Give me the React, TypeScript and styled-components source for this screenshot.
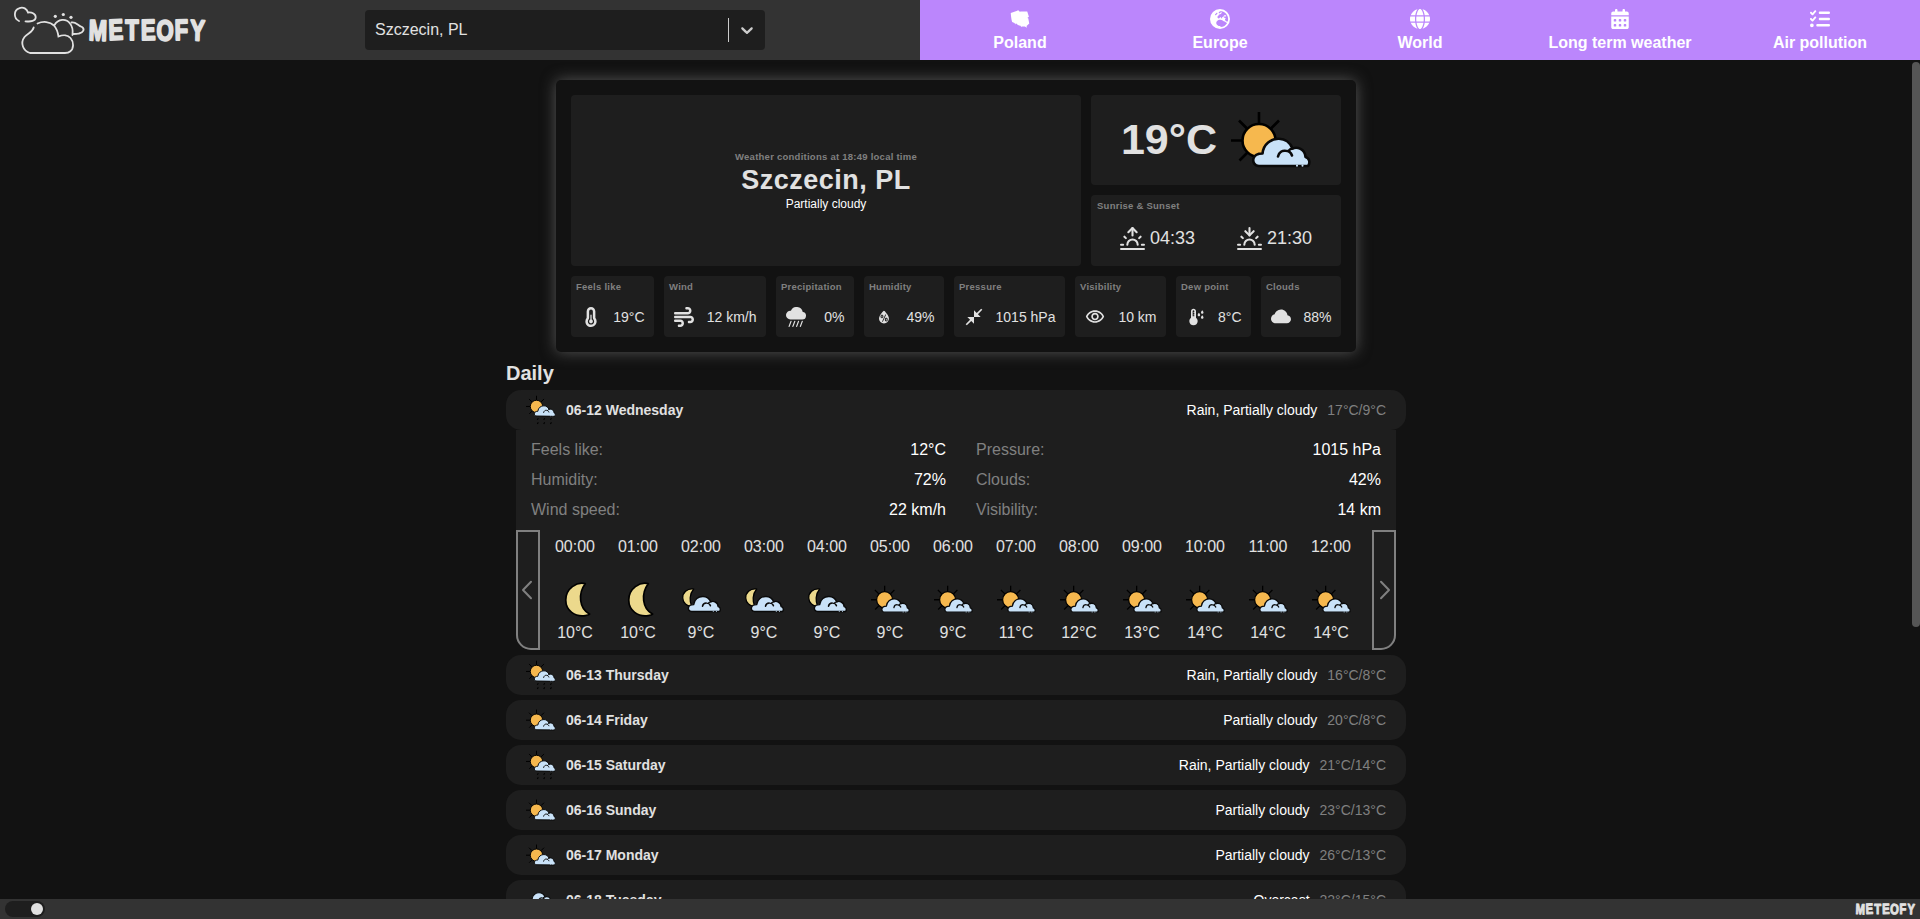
import React from "react";
import styled, { createGlobalStyle, css } from "styled-components";
import { FaTemperatureHalf, FaWind, FaGlobe, FaCalendarDays, FaListCheck, FaEarthEurope } from "react-icons/fa6";
import { BsCloudRainHeavyFill, BsCloudFill } from "react-icons/bs";
import { WiHumidity } from "react-icons/wi";
import { MdCloseFullscreen, MdOutlineVisibility, MdDewPoint } from "react-icons/md";
import { GiPoland } from "react-icons/gi";
import { FiSunrise, FiSunset } from "react-icons/fi";

const color = {
  page: "#121212",
  surface: "#1e1e1e",
  bar: "#333333",
  text: "#e1e1e1",
  muted: "#808080",
  accent: "#bb86fc",
};

const GlobalStyle = createGlobalStyle`
  * { box-sizing: border-box; }
  body {
    margin: 0;
    background: ${color.page};
    color: ${color.text};
    font-family: "Liberation Sans", Arial, sans-serif;
    font-size: 16px;
    overflow: hidden;
  }
`;

const Page = styled.div`
  display: flex;
  flex-direction: column;
  height: 100vh;
`;

const Header = styled.header`
  display: flex;
  flex: 0 0 60px;
  background: ${color.bar};
`;

const HeaderLeft = styled.div`
  display: flex;
  align-items: center;
  width: 920px;
`;

const LogoSlot = styled.div`
  width: 365px;
  height: 60px;
`;

const Select = styled.div`
  display: flex;
  align-items: center;
  width: 400px;
  height: 40px;
  padding-left: 10px;
  border-radius: 4px;
  background: ${color.surface};
`;

const SelectValue = styled.span`
  flex: 1;
  line-height: 18px;
`;

const SelectSeparator = styled.span`
  width: 1px;
  height: 24px;
  background: #ccc;
`;

const SelectArrow = styled.span`
  display: flex;
  padding: 8px;
`;

const Nav = styled.nav`
  display: grid;
  grid-template-columns: repeat(5, 200px);
  background: ${color.accent};
`;

const NavItem = styled.a`
  display: flex;
  flex-direction: column;
  align-items: center;
  justify-content: center;
  gap: 5px;
  color: #fff;
  font-weight: 700;
  line-height: 18px;
`;

const Body = styled.div`
  display: flex;
  flex: 1;
  min-height: 0;
`;

const Content = styled.main`
  display: flex;
  flex-direction: column;
  align-items: center;
  flex: 1;
  overflow: hidden;
  padding-top: 20px;
`;

const ScrollTrack = styled.div`
  width: 8px;
  padding-top: 2px;
`;

const ScrollThumb = styled.div`
  height: 565px;
  border-radius: 4px;
  background: #555;
`;

const Current = styled.section`
  display: flex;
  flex-direction: column;
  flex: 0 0 auto;
  gap: 10px;
  width: 800px;
  padding: 15px;
  border-radius: 5px;
  box-shadow: 0 0 15px #555;
`;

const Summary = styled.div`
  display: grid;
  grid-template-columns: 510px 250px;
  grid-template-rows: 90px 71px;
  gap: 10px;
`;

const tile = css`
  border-radius: 4px;
  background: ${color.surface};
`;

const Place = styled.div`
  ${tile}
  grid-row: span 2;
  display: flex;
  flex-direction: column;
  align-items: center;
  justify-content: center;
  gap: 2px;
`;

const Label = styled.span`
  color: ${color.muted};
  font-size: 9.5px;
  font-weight: 700;
  letter-spacing: 0.25px;
  line-height: 12px;
`;

const PlaceName = styled.h1`
  margin: 0;
  font-size: 27px;
  letter-spacing: 0.5px;
  line-height: 30px;
`;

const PlaceState = styled.span`
  font-size: 12px;
  line-height: 14px;
  color: #fff;
`;

const Temperature = styled.div`
  ${tile}
  display: flex;
  align-items: center;
  justify-content: center;
  gap: 14px;
`;

const Degrees = styled.span`
  margin-bottom: 2px;
  font-size: 43px;
  font-weight: 700;
`;

const Sun = styled.div`
  ${tile}
  display: flex;
  flex-direction: column;
  padding: 5px 6px;
`;

const SunTimes = styled.div`
  display: flex;
  flex: 1;
  align-items: center;
  justify-content: space-between;
  padding: 3px 23px 0;
`;

const SunTime = styled.span`
  display: flex;
  align-items: center;
  gap: 5px;
  font-size: 18px;
`;

const Stats = styled.div`
  display: grid;
  grid-template-columns: 83px 102px 78px 80px 111px 91px 75px 80px;
  gap: 10px;
`;

const Stat = styled.div`
  ${tile}
  display: flex;
  flex-direction: column;
  height: 61px;
  padding: 5px 0 10px;

  ${Label} {
    padding-left: 5px;
    white-space: nowrap;
  }
`;

const StatRow = styled.div`
  display: flex;
  flex: 1;
  align-items: flex-end;
  justify-content: space-between;
  padding: 0 9.5px 0 10px;
  font-size: 14px;
  line-height: 20px;
`;

const Daily = styled.section`
  display: flex;
  flex-direction: column;
  flex: 0 0 auto;
  width: 900px;
`;

const DailyTitle = styled.h2`
  margin: 10px 0 5px;
  font-size: 20px;
  line-height: 23px;
`;

const DayList = styled.div`
  display: flex;
  flex-direction: column;
  gap: 5px;
`;

const DayRow = styled.div`
  display: flex;
  align-items: center;
  gap: 10px;
  height: 40px;
  padding: 0 20px;
  border-radius: 15px;
  background: ${color.surface};
  font-size: 14px;
`;

const DayName = styled.strong`
  flex: 1;
`;

const DayState = styled.span`
  color: #fff;
`;

const Muted = styled.span`
  color: ${color.muted};
`;

const DayDetails = styled.div`
  height: 220px;
  margin: 0 10px;
  padding-top: 5px;
  border-radius: 0 0 15px 15px;
  background: ${color.surface};
`;

const Facts = styled.div`
  display: grid;
  grid-template-columns: 415px 405px;
  column-gap: 30px;
  padding: 0 15px 5px;
`;

const Fact = styled.div`
  display: flex;
  align-items: center;
  justify-content: space-between;
  height: 30px;
`;

const FactValue = styled.span`
  color: #fff;
`;

const Hourly = styled.div`
  display: flex;
  justify-content: space-between;
  height: 120px;
`;

const ScrollButton = styled.button<{ $side: "left" | "right" }>`
  display: flex;
  align-items: center;
  justify-content: center;
  width: 24px;
  padding: 0;
  border: 2px solid ${color.muted};
  border-radius: ${(p) => (p.$side === "left" ? "0 0 0 15px" : "0 0 15px 0")};
  background: transparent;
  color: ${color.muted};
`;

const Hours = styled.div`
  display: grid;
  flex: 1;
  grid-template-columns: repeat(13, 63px);
  padding-left: 3.5px;
`;

const Hour = styled.div`
  display: flex;
  flex-direction: column;
  align-items: center;
  padding-top: 8px;
  line-height: 18px;
`;

const HourIcon = styled.span`
  display: flex;
  margin: 24px 0 5px;
`;

const Footer = styled.footer`
  display: flex;
  align-items: center;
  justify-content: space-between;
  flex: 0 0 20px;
  padding: 0 4px 0 5px;
  background: ${color.bar};
`;

const Toggle = styled.span`
  display: flex;
  align-items: center;
  justify-content: flex-end;
  width: 40px;
  height: 16px;
  padding: 2px;
  border-radius: 8px;
  background: ${color.surface};
`;

const Knob = styled.span`
  width: 12px;
  height: 12px;
  border-radius: 50%;
  background: ${color.text};
`;

type Kind = "moon" | "moonCloud" | "sunCloud" | "rain" | "cloud";

const Cloud = () => (
  <g strokeWidth="2.6" stroke="#0a0a0a" strokeLinecap="round" strokeLinejoin="round">
    <path
      fill="#c9e2f8"
      d="M28 66C23.500 66 21.500 62 22.500 58.500C23.500 55 27 53.500 31.500 53.500C32.500 44 40 38.500 48 38.800C54 39 59 42.500 61.500 48.500C66 46.500 74 48.500 74.500 57C78.500 58 79.500 63 77 66Z"
    />
    <path fill="none" d="M47 56.500C48 52 51.500 50.500 54.500 50.800C57.500 51 60 52.500 61 55.500M57.500 51C58.500 49.500 60 48.700 61.500 48.500" />
    <path stroke="#c9e2f8" strokeWidth="2" d="M66 65.500v.2M71.500 65.500v.2" />
  </g>
);

const SunDisc = () => (
  <g stroke="#000" strokeWidth="2.600">
    <path d="M28 12v11M0 40.500h11M8 20.500l8 8M48 20.500l-8 8M8.500 60.500l8-8" />
    <circle cx="28" cy="40.500" r="16.500" fill="#f6b84e" />
  </g>
);

const WeatherIcon = ({ kind, size }: { kind: Kind; size: number }) => (
  <svg width={size} height={size} viewBox="0 0 80 80" overflow="visible">
    {kind === "moon" && (
      <path
        transform="translate(5 -1)"
        d="M55 8.500C38 4 15 18 15 42C15 64 34 77 55 74C60 73.500 63 72 64 71C42 60 40 28 55 8.500Z"
        fill="#ecd98c"
        stroke="#000"
        strokeWidth="3.500"
        strokeLinejoin="round"
      />
    )}
    {kind === "moonCloud" && (
      <>
        <path
          d="M24 18.500C10 16.500 1 27 1.500 37C2 47 10 54.500 20 53.500C15 44 15 29 24 18.500Z"
          fill="#ecd98c"
          stroke="#000"
          strokeWidth="2.600"
          strokeLinejoin="round"
        />
        <g transform="translate(-13 -10) scale(1.170 1.130)">
          <Cloud />
        </g>
      </>
    )}
    {kind === "sunCloud" && (
      <>
        <SunDisc />
        <Cloud />
      </>
    )}
    {kind === "rain" && (
      <>
        <g transform="translate(0 -10)">
          <SunDisc />
          <Cloud />
        </g>
        <path
          d="M33 62l-3 4M50 62l-3 4M68 62l-3 4M33 73l-3 4M50 73l-3 4M68 73l-3 4"
          stroke="#000"
          strokeWidth="3"
        />
      </>
    )}
    {kind === "cloud" && (
      <g transform="translate(-20 -24) scale(1.150)">
        <Cloud />
      </g>
    )}
  </svg>
);

/* Condensed wordmark with a start position and a tilt for every letter. */
const Wordmark = ({ x, y, scale }: { x: number; y: number; scale: number }) => (
  <text
    transform={`translate(${x} ${y}) scale(${scale * 0.76} ${scale})`}
    x="0 26.5 48.5 69 89 113.500 133.500"
    y="0"
    rotate="2 -2 0 -1 2 -1 2"
    fontFamily="Liberation Sans, Arial, sans-serif"
    fontWeight="700"
    fontSize="29"
    fill={color.text}
    stroke={color.text}
    strokeWidth="2"
    strokeLinejoin="round"
  >
    METEOFY
  </text>
);

const Logo = () => (
  <svg width="220" height="60" viewBox="0 0 220 60">
    <g fill="none" stroke={color.text} strokeWidth="1.800" strokeLinecap="round">
      <path d="M19 21C13 18 14 10 19 8.300C23.500 6.500 27 9 28 12.500C32 12 36 14 35.700 17.500C35.500 21 31 22 25.500 21.300" />
      <path d="M37.500 23.500C43 21 50 21.500 54 25.500C57 29 58 33 58.500 36.500C63 34.500 68 35 70.500 38C74 42 74 49 70 51.500C68.500 53 67 53 65 53L30 53C23 51 20 43 24.500 37C28 33 32.500 32.500 33.700 27.500" />
      <path d="M54.500 25C58 19 66 18 70 23.500C73 27 73 31 72.500 35" />
      <path d="M71.500 22.500C76 21.500 77.500 25.500 82 27C85 29 83.500 32.500 79 33.500C77 34 75 34 73.500 34" />
    </g>
    <g fill={color.text}>
      <circle cx="55.300" cy="16.300" r="1.600" />
      <circle cx="63.300" cy="14.500" r="1.600" />
      <circle cx="71" cy="17.300" r="1.600" />
    </g>
    <Wordmark x={88.5} y={40} scale={1} />
  </svg>
);

const navItems = [
  { label: "Poland", Icon: GiPoland },
  { label: "Europe", Icon: FaEarthEurope },
  { label: "World", Icon: FaGlobe },
  { label: "Long term weather", Icon: FaCalendarDays },
  { label: "Air pollution", Icon: FaListCheck },
];

const stats = [
  { label: "Feels like", value: "19°C", Icon: FaTemperatureHalf },
  { label: "Wind", value: "12 km/h", Icon: FaWind },
  { label: "Precipitation", value: "0%", Icon: BsCloudRainHeavyFill },
  { label: "Humidity", value: "49%", Icon: WiHumidity },
  { label: "Pressure", value: "1015 hPa", Icon: MdCloseFullscreen },
  { label: "Visibility", value: "10 km", Icon: MdOutlineVisibility },
  { label: "Dew point", value: "8°C", Icon: MdDewPoint },
  { label: "Clouds", value: "88%", Icon: BsCloudFill },
];

const facts = [
  ["Feels like:", "12°C"],
  ["Pressure:", "1015 hPa"],
  ["Humidity:", "72%"],
  ["Clouds:", "42%"],
  ["Wind speed:", "22 km/h"],
  ["Visibility:", "14 km"],
];

const hours: [string, Kind, string][] = [
  ["00:00", "moon", "10°C"],
  ["01:00", "moon", "10°C"],
  ["02:00", "moonCloud", "9°C"],
  ["03:00", "moonCloud", "9°C"],
  ["04:00", "moonCloud", "9°C"],
  ["05:00", "sunCloud", "9°C"],
  ["06:00", "sunCloud", "9°C"],
  ["07:00", "sunCloud", "11°C"],
  ["08:00", "sunCloud", "12°C"],
  ["09:00", "sunCloud", "13°C"],
  ["10:00", "sunCloud", "14°C"],
  ["11:00", "sunCloud", "14°C"],
  ["12:00", "sunCloud", "14°C"],
];

const days: { name: string; kind: Kind; state: string; range: string; open?: boolean }[] = [
  { name: "06-12 Wednesday", kind: "rain", state: "Rain, Partially cloudy", range: "17°C/9°C", open: true },
  { name: "06-13 Thursday", kind: "rain", state: "Rain, Partially cloudy", range: "16°C/8°C" },
  { name: "06-14 Friday", kind: "sunCloud", state: "Partially cloudy", range: "20°C/8°C" },
  { name: "06-15 Saturday", kind: "rain", state: "Rain, Partially cloudy", range: "21°C/14°C" },
  { name: "06-16 Sunday", kind: "sunCloud", state: "Partially cloudy", range: "23°C/13°C" },
  { name: "06-17 Monday", kind: "sunCloud", state: "Partially cloudy", range: "26°C/13°C" },
  { name: "06-18 Tuesday", kind: "cloud", state: "Overcast", range: "22°C/15°C" },
];

const Chevron = ({ d }: { d: string }) => (
  <svg width="20" height="20" viewBox="0 0 20 20" fill="none" stroke="currentColor" strokeWidth="2" strokeLinecap="round" strokeLinejoin="round">
    <path d={d} />
  </svg>
);

const Details = () => (
  <DayDetails>
    <Facts>
      {facts.map(([label, value]) => (
        <Fact key={label}>
          <Muted>{label}</Muted>
          <FactValue>{value}</FactValue>
        </Fact>
      ))}
    </Facts>
    <Hourly>
      <ScrollButton $side="left">
        <Chevron d="M13 1.800L5 10l8 8.200" />
      </ScrollButton>
      <Hours>
        {hours.map(([time, kind, temp]) => (
          <Hour key={time}>
            {time}
            <HourIcon>
              <WeatherIcon kind={kind} size={39} />
            </HourIcon>
            {temp}
          </Hour>
        ))}
      </Hours>
      <ScrollButton $side="right">
        <Chevron d="M7 1.800L15 10l-8 8.200" />
      </ScrollButton>
    </Hourly>
  </DayDetails>
);

export default function App() {
  return (
    <Page>
      <GlobalStyle />
      <Header>
        <HeaderLeft>
          <LogoSlot>
            <Logo />
          </LogoSlot>
          <Select>
            <SelectValue>Szczecin, PL</SelectValue>
            <SelectSeparator />
            <SelectArrow>
              <svg width="20" height="20" viewBox="0 0 20 20" fill="#ccc">
                <path d="M4.516 7.548c0.436-0.446 1.043-0.481 1.576 0l3.908 3.747 3.908-3.747c0.533-0.481 1.141-0.446 1.574 0 0.436 0.445 0.408 1.197 0 1.615-0.406 0.418-4.695 4.502-4.695 4.502-0.217 0.223-0.502 0.335-0.787 0.335s-0.570-0.112-0.789-0.335c0 0-4.287-4.084-4.695-4.502s-0.436-1.170 0-1.615z" />
              </svg>
            </SelectArrow>
          </Select>
        </HeaderLeft>
        <Nav>
          {navItems.map(({ label, Icon }) => (
            <NavItem key={label}>
              <Icon size={20} />
              {label}
            </NavItem>
          ))}
        </Nav>
      </Header>
      <Body>
        <Content>
          <Current>
            <Summary>
              <Place>
                <Label>Weather conditions at 18:49 local time</Label>
                <PlaceName>Szczecin, PL</PlaceName>
                <PlaceState>Partially cloudy</PlaceState>
              </Place>
              <Temperature>
                <Degrees>19°C</Degrees>
                <WeatherIcon kind="sunCloud" size={80} />
              </Temperature>
              <Sun>
                <Label>Sunrise &amp; Sunset</Label>
                <SunTimes>
                  <SunTime>
                    <FiSunrise size={25} />
                    04:33
                  </SunTime>
                  <SunTime>
                    <FiSunset size={25} />
                    21:30
                  </SunTime>
                </SunTimes>
              </Sun>
            </Summary>
            <Stats>
              {stats.map(({ label, value, Icon }) => (
                <Stat key={label}>
                  <Label>{label}</Label>
                  <StatRow>
                    <Icon size={20} />
                    {value}
                  </StatRow>
                </Stat>
              ))}
            </Stats>
          </Current>
          <Daily>
            <DailyTitle>Daily</DailyTitle>
            <DayList>
              {days.map((day) => (
                <div key={day.name}>
                  <DayRow>
                    <WeatherIcon kind={day.kind} size={30} />
                    <DayName>{day.name}</DayName>
                    <DayState>{day.state}</DayState>
                    <Muted>{day.range}</Muted>
                  </DayRow>
                  {day.open && <Details />}
                </div>
              ))}
            </DayList>
          </Daily>
        </Content>
        <ScrollTrack>
          <ScrollThumb />
        </ScrollTrack>
      </Body>
      <Footer>
        <Toggle>
          <Knob />
        </Toggle>
        <svg width="62" height="20" viewBox="0 0 62 20">
          <Wordmark x={1.5} y={15} scale={0.51} />
        </svg>
      </Footer>
    </Page>
  );
}
